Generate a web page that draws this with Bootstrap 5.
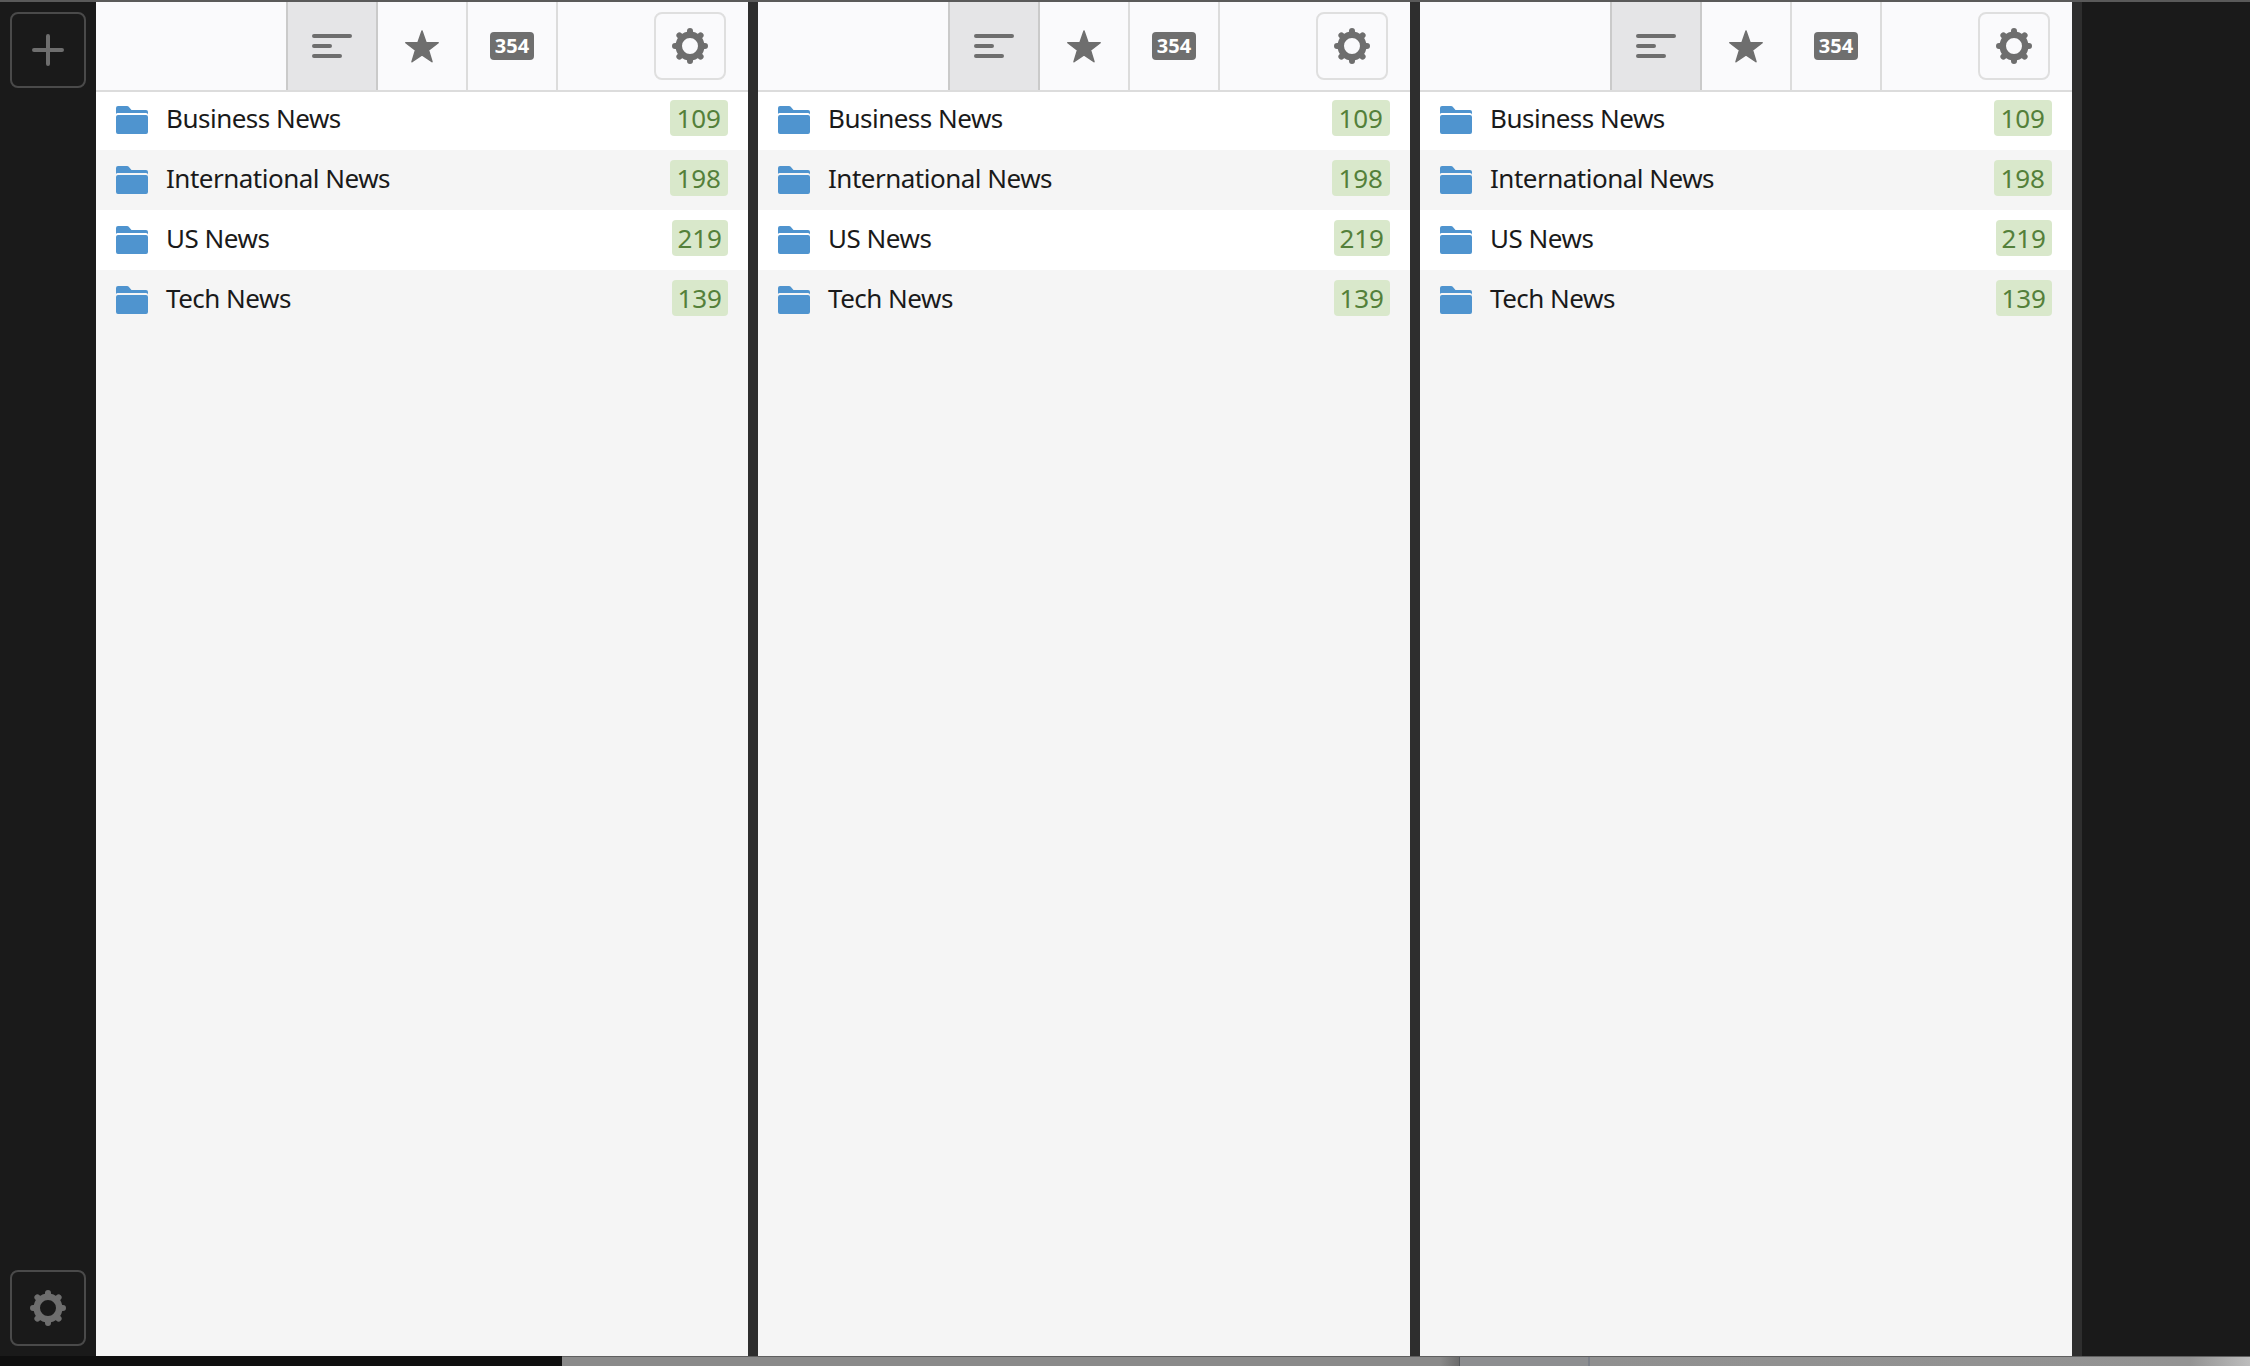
<!doctype html>
<html lang="en">
<head>
<meta charset="utf-8">
<title>News</title>
<link href="https://cdn.jsdelivr.net/npm/bootstrap@5.3.0/dist/css/bootstrap.min.css" rel="stylesheet">
<style>
html,body{height:100%;overflow:hidden}
body{background:#1a1a1a;font-family:"Noto Sans","Liberation Sans",sans-serif}
.desk{height:1366px}
.topline{height:2px;background:#5a5a5a}
.mainrow{height:1354px}
.rail{width:96px;padding:10px}
.railbtn{width:76px;height:76px;border:2px solid #4a4a4a;border-radius:8px;background:transparent;padding:0}
.panewrap{width:662px;border-right:10px solid #2e2e2e}
.pane{background:#f5f5f5}
.panehead{height:90px;background:#fafafc;border-bottom:2px solid #dcdcdc}
.tabs{margin-left:190px}
.tabbtn{width:90px;border:0;border-right:2px solid #dcdcdc;background:transparent;padding:0}
.tabbtn.first{width:92px;border-left:2px solid #cacaca;border-right-color:#cacaca}
.tabbtn.on{background:#e5e5e7}
.headgear{width:72px;height:68px;border:2px solid #dfdfdf;border-radius:8px;background:transparent;padding:0;margin:10px 22px 0 0}
.count{background:#6f6f6f;color:#fff;font-size:20px;font-weight:700;line-height:28px;height:28px;width:44px;border-radius:4px;display:inline-block;text-align:center}
.feed{height:60px;padding:0 20px;background:#f5f5f5;border:0;border-radius:0;color:#1a1a1a;font-size:26px;letter-spacing:-.5px}
.feed:nth-child(odd){background:#fff}
.feed:first-child{height:58px;padding-bottom:2px}
.feedname{margin:0 0 3px 18px}
.tally{background:#d9e8cb;color:#54803a;font-size:26px;line-height:36px;height:36px;padding:0 7px 0 6px;border-radius:4px;font-weight:400;letter-spacing:0;margin-bottom:4px}
.tally.slim{padding:0 6px 0 5px}
.strip{height:10px;background:linear-gradient(#5f5f5f,#5f5f5f) 562px 0/100% 1px no-repeat,linear-gradient(90deg,#0f0f0f 0,#0f0f0f 562px,#8a8a8a 562px,#8a8a8a 1440px,#6c6c6c 1459px,#55585c 1459px,#55585c 1460px,#8d8e90 1460px,#8d8e90 1588px,#7c8088 1588px,#7c8088 1590px,#909090 1590px,#939393 2190px,#bdbdbd 2250px)}
.defs{width:0;height:0;position:absolute}
</style>
</head>
<body>
<svg class="defs" aria-hidden="true">
  <symbol id="gear" viewBox="0 0 36 36">
    <circle cx="18" cy="18" r="11.250" fill="none" stroke="#6e6e6e" stroke-width="6.500"/>
    <path d="M18 3v4M28.600 7.400l-2.800 2.800M33 18h-4M28.600 28.600l-2.800-2.800M18 33v-4M7.400 28.600l2.800-2.800M3 18h4M7.400 7.400l2.800 2.800" stroke="#6e6e6e" stroke-width="6" stroke-linecap="round" fill="none"/>
  </symbol>
  <symbol id="folder" viewBox="0 0 32 28">
    <path fill="#4f94cf" d="M0 8V2a2 2 0 0 1 2-2h9a2 2 0 0 1 1.500.600L15.500 4H30a2 2 0 0 1 2 2v2.500a2 2 0 0 0-2-1.500H2a2 2 0 0 0-2 1zM0 11a2 2 0 0 1 2-2h28a2 2 0 0 1 2 2v15a2 2 0 0 1-2 2H2a2 2 0 0 1-2-2z"/>
  </symbol>
</svg>
<div class="desk d-flex flex-column">
  <div class="topline"></div>
  <div class="mainrow d-flex">
    <div class="rail d-flex flex-column justify-content-between">
      <button class="railbtn d-flex align-items-center justify-content-center" aria-label="Add"><svg width="32" height="32" viewBox="0 0 32 32"><path d="M16 2v28M2 16h28" stroke="#6e6e6e" stroke-width="4" stroke-linecap="round" fill="none"/></svg></button>
      <button class="railbtn d-flex align-items-center justify-content-center" aria-label="Settings"><svg width="36" height="36"><use href="#gear"/></svg></button>
    </div>

    <div class="panewrap d-flex flex-column"><div class="pane flex-grow-1">
      <div class="panehead d-flex justify-content-between">
        <div class="tabs d-flex">
          <button class="tabbtn first on d-flex align-items-center justify-content-center" aria-label="Sort"><svg width="40" height="24" viewBox="0 0 40 24"><path d="M2 2h36M2 12h16M2 22h26" stroke="#6e6e6e" stroke-width="4" stroke-linecap="round"/></svg></button>
          <button class="tabbtn d-flex align-items-center justify-content-center" aria-label="Starred"><svg width="36" height="34" viewBox="0 0 36 34"><path fill="#6e6e6e" stroke="#6e6e6e" stroke-width="1.500" stroke-linejoin="round" d="M18 2l4 11.500 12.200.250-9.700 7.350L28 32.750 18 25.800 8 32.750l3.500-11.650-9.700-7.350L14 13.500z"/></svg></button>
          <button class="tabbtn d-flex align-items-center justify-content-center"><span class="count">354</span></button>
        </div>
        <button class="headgear d-flex align-items-center justify-content-center" aria-label="Settings"><svg width="36" height="36"><use href="#gear"/></svg></button>
      </div>
      <div class="list-group list-group-flush">
        <div class="list-group-item feed d-flex align-items-center"><svg width="32" height="28"><use href="#folder"/></svg><span class="feedname flex-grow-1">Business News</span><span class="badge tally">109</span></div>
        <div class="list-group-item feed d-flex align-items-center"><svg width="32" height="28"><use href="#folder"/></svg><span class="feedname flex-grow-1">International News</span><span class="badge tally">198</span></div>
        <div class="list-group-item feed d-flex align-items-center"><svg width="32" height="28"><use href="#folder"/></svg><span class="feedname flex-grow-1">US News</span><span class="badge tally slim">219</span></div>
        <div class="list-group-item feed d-flex align-items-center"><svg width="32" height="28"><use href="#folder"/></svg><span class="feedname flex-grow-1">Tech News</span><span class="badge tally slim">139</span></div>
      </div>
    </div></div>

    <div class="panewrap d-flex flex-column"><div class="pane flex-grow-1">
      <div class="panehead d-flex justify-content-between">
        <div class="tabs d-flex">
          <button class="tabbtn first on d-flex align-items-center justify-content-center" aria-label="Sort"><svg width="40" height="24" viewBox="0 0 40 24"><path d="M2 2h36M2 12h16M2 22h26" stroke="#6e6e6e" stroke-width="4" stroke-linecap="round"/></svg></button>
          <button class="tabbtn d-flex align-items-center justify-content-center" aria-label="Starred"><svg width="36" height="34" viewBox="0 0 36 34"><path fill="#6e6e6e" stroke="#6e6e6e" stroke-width="1.500" stroke-linejoin="round" d="M18 2l4 11.500 12.200.250-9.700 7.350L28 32.750 18 25.800 8 32.750l3.500-11.650-9.700-7.350L14 13.500z"/></svg></button>
          <button class="tabbtn d-flex align-items-center justify-content-center"><span class="count">354</span></button>
        </div>
        <button class="headgear d-flex align-items-center justify-content-center" aria-label="Settings"><svg width="36" height="36"><use href="#gear"/></svg></button>
      </div>
      <div class="list-group list-group-flush">
        <div class="list-group-item feed d-flex align-items-center"><svg width="32" height="28"><use href="#folder"/></svg><span class="feedname flex-grow-1">Business News</span><span class="badge tally">109</span></div>
        <div class="list-group-item feed d-flex align-items-center"><svg width="32" height="28"><use href="#folder"/></svg><span class="feedname flex-grow-1">International News</span><span class="badge tally">198</span></div>
        <div class="list-group-item feed d-flex align-items-center"><svg width="32" height="28"><use href="#folder"/></svg><span class="feedname flex-grow-1">US News</span><span class="badge tally slim">219</span></div>
        <div class="list-group-item feed d-flex align-items-center"><svg width="32" height="28"><use href="#folder"/></svg><span class="feedname flex-grow-1">Tech News</span><span class="badge tally slim">139</span></div>
      </div>
    </div></div>

    <div class="panewrap d-flex flex-column"><div class="pane flex-grow-1">
      <div class="panehead d-flex justify-content-between">
        <div class="tabs d-flex">
          <button class="tabbtn first on d-flex align-items-center justify-content-center" aria-label="Sort"><svg width="40" height="24" viewBox="0 0 40 24"><path d="M2 2h36M2 12h16M2 22h26" stroke="#6e6e6e" stroke-width="4" stroke-linecap="round"/></svg></button>
          <button class="tabbtn d-flex align-items-center justify-content-center" aria-label="Starred"><svg width="36" height="34" viewBox="0 0 36 34"><path fill="#6e6e6e" stroke="#6e6e6e" stroke-width="1.500" stroke-linejoin="round" d="M18 2l4 11.500 12.200.250-9.700 7.350L28 32.750 18 25.800 8 32.750l3.500-11.650-9.700-7.350L14 13.500z"/></svg></button>
          <button class="tabbtn d-flex align-items-center justify-content-center"><span class="count">354</span></button>
        </div>
        <button class="headgear d-flex align-items-center justify-content-center" aria-label="Settings"><svg width="36" height="36"><use href="#gear"/></svg></button>
      </div>
      <div class="list-group list-group-flush">
        <div class="list-group-item feed d-flex align-items-center"><svg width="32" height="28"><use href="#folder"/></svg><span class="feedname flex-grow-1">Business News</span><span class="badge tally">109</span></div>
        <div class="list-group-item feed d-flex align-items-center"><svg width="32" height="28"><use href="#folder"/></svg><span class="feedname flex-grow-1">International News</span><span class="badge tally">198</span></div>
        <div class="list-group-item feed d-flex align-items-center"><svg width="32" height="28"><use href="#folder"/></svg><span class="feedname flex-grow-1">US News</span><span class="badge tally slim">219</span></div>
        <div class="list-group-item feed d-flex align-items-center"><svg width="32" height="28"><use href="#folder"/></svg><span class="feedname flex-grow-1">Tech News</span><span class="badge tally slim">139</span></div>
      </div>
    </div></div>
  </div>
  <div class="strip"></div>
</div>
</body>
</html>
